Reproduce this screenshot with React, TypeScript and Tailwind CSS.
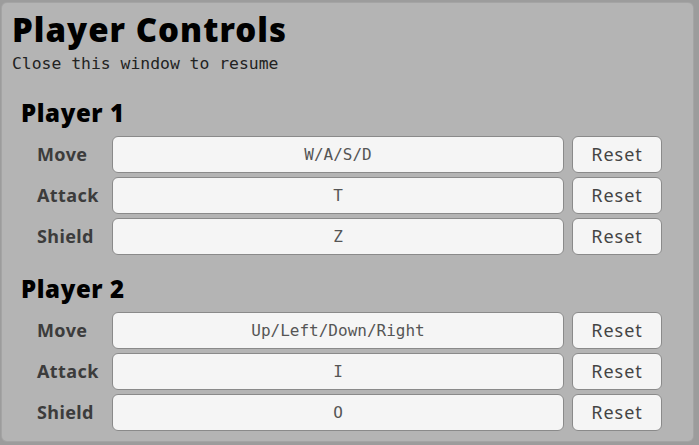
import React from "react";

const sans = { fontFamily: '"Noto Sans", "DejaVu Sans", sans-serif' };

function Row({ label, value }: { label: string; value: string }) {
  return (
    <div className="flex items-center h-[37px]">
      <div className="w-[75px] text-[18px] tracking-[0.4px] font-bold text-[#3c3c3c]" style={sans}>
        {label}
      </div>
      <div className="w-[452px] h-[37px] flex items-center justify-center rounded-[6px] border border-[#8a8a8a] bg-[#f5f5f5] text-[16px] text-[#555] font-['DejaVu_Sans_Mono',monospace]">
        {value}
      </div>
      <div className="ml-[8px] w-[90px] h-[37px] flex items-center justify-center rounded-[6px] border border-[#8a8a8a] bg-[#f5f5f5] text-[18px] tracking-[1px] text-[#444]" style={sans}>
        Reset
      </div>
    </div>
  );
}

function Section({ title, rows }: { title: string; rows: [string, string][] }) {
  return (
    <div className="pl-[9px]">
      <div className="text-[24px] leading-[28px] tracking-[0.6px] font-black text-black" style={sans}>
        {title}
      </div>
      <div className="pl-[16px] mt-[9px] flex flex-col gap-[4px]">
        {rows.map(([l, v]) => (
          <Row key={l} label={l} value={v} />
        ))}
      </div>
    </div>
  );
}

export default function App() {
  return (
    <div className="w-[699px] h-[445px] bg-[#9c9c9c] pt-[3px] pl-[2px] overflow-hidden">
      <div className="w-[691px] h-[438px] bg-[#b4b4b4] rounded-[5px] pl-[10px] pt-[5px] shadow-[0_0_0_1px_#a4a4a4]">
        <div className="text-[33px] leading-[44px] tracking-[1px] font-black text-black" style={sans}>
          Player Controls
        </div>
        <div className="mt-[2px] text-[16.4px] leading-[20px] text-[#222] font-['DejaVu_Sans_Mono',monospace]">
          Close this window to resume
        </div>
        <div className="mt-[25px] flex flex-col gap-[20px]">
          <Section
            title="Player 1"
            rows={[
              ["Move", "W/A/S/D"],
              ["Attack", "T"],
              ["Shield", "Z"],
            ]}
          />
          <Section
            title="Player 2"
            rows={[
              ["Move", "Up/Left/Down/Right"],
              ["Attack", "I"],
              ["Shield", "O"],
            ]}
          />
        </div>
      </div>
    </div>
  );
}
